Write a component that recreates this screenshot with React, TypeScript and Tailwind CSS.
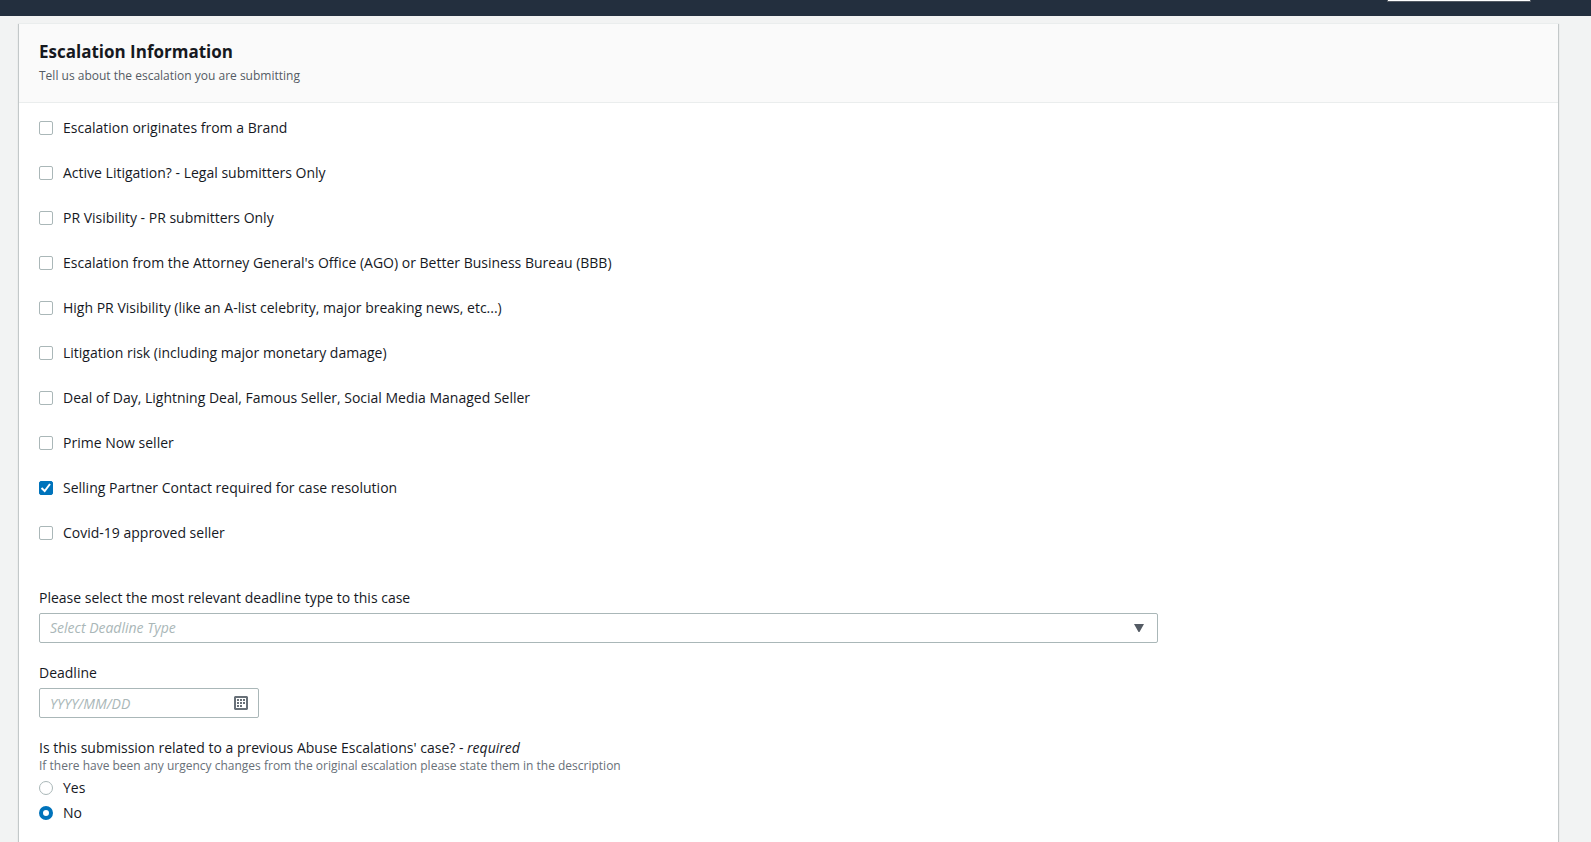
import { useState } from "react";

const flags = [
  "Escalation originates from a Brand",
  "Active Litigation? - Legal submitters Only",
  "PR Visibility - PR submitters Only",
  "Escalation from the Attorney General's Office (AGO) or Better Business Bureau (BBB)",
  "High PR Visibility (like an A-list celebrity, major breaking news, etc...)",
  "Litigation risk (including major monetary damage)",
  "Deal of Day, Lightning Deal, Famous Seller, Social Media Managed Seller",
  "Prime Now seller",
  "Selling Partner Contact required for case resolution",
  "Covid-19 approved seller",
];

const fieldStyle =
  "h-[30px] w-full appearance-none rounded-xs border border-[#aab7b8] bg-white px-2.5 text-sm focus:outline-none focus:border-[#00a1c9]";

const Checkbox = ({ label, defaultChecked = false }: { label: string; defaultChecked?: boolean }) => (
  <label className="flex items-center gap-2.5 leading-5">
    <span className="grid size-3.5 shrink-0">
      <input
        type="checkbox"
        defaultChecked={defaultChecked}
        className="peer col-start-1 row-start-1 size-3.5 appearance-none rounded-xs border border-[#aab7b8] bg-white checked:border-[#0073bb] checked:bg-[#0073bb]"
      />
      <svg
        viewBox="0 0 14 14"
        className="pointer-events-none invisible col-start-1 row-start-1 size-3.5 peer-checked:visible"
        fill="none"
        stroke="#fff"
        strokeWidth="2"
      >
        <path d="M2.5 7 5.7 10 11 3" />
      </svg>
    </span>
    {label}
  </label>
);

const Radio = ({
  label,
  checked,
  onChange,
}: {
  label: string;
  checked: boolean;
  onChange: () => void;
}) => (
  <label className="flex items-center gap-2.5 leading-5">
    <input
      type="radio"
      name="previousCase"
      checked={checked}
      onChange={onChange}
      className="size-3.5 shrink-0 appearance-none rounded-full border border-[#aab7b8] bg-white checked:border-4 checked:border-[#0073bb]"
    />
    {label}
  </label>
);

const CalendarIcon = () => (
  <svg viewBox="0 0 14 14" className="size-3.5" fill="#687078">
    <path fillRule="evenodd" d="M1 0h12l1 1v12l-1 1H1l-1-1V1zM2 2v10h10V2z" />
    <path d="M6 3h2v2H6zM9 3h2v2H9zM3 6h2v2H3zM6 6h2v2H6zM9 6h2v2H9zM3 9h2v2H3zM6 9h2v2H6zM3 3h2v2H3z" />
  </svg>
);

export default function App() {
  const [related, setRelated] = useState("No");
  const [deadlineType, setDeadlineType] = useState("");

  return (
    <div className="flex min-h-screen flex-col bg-[#f2f3f3] font-['Open_Sans','Noto_Sans',sans-serif] text-sm text-[#16191f]">
      {/* Top bar */}
      <header className="flex h-4 items-end justify-end overflow-hidden bg-[#232f3e] pr-[60px] pb-3.5">
        <input
          type="search"
          aria-label="Search"
          className="h-[30px] w-36 shrink-0 appearance-none border border-[#545b64] bg-white px-2"
        />
      </header>

      <main className="mt-[7px] mr-[33px] ml-[19px] flex-1 border-t border-[#eaeded] bg-white shadow-[0_1px_1px_0_rgba(0,28,36,0.3),1px_1px_1px_0_rgba(0,28,36,0.15),-1px_1px_1px_0_rgba(0,28,36,0.15)]">
        <div className="border-b border-[#eaeded] bg-[#fafafa] px-5 py-[18px]">
          <h2 className="text-[17px] leading-5 font-bold">Escalation Information</h2>
          <p className="mt-1.5 text-xs leading-4 text-[#545b64]">
            Tell us about the escalation you are submitting
          </p>
        </div>

        <form className="px-5 pt-[15px]">
          <div className="flex flex-col items-start gap-[25px]">
            {flags.map((flag) => (
              <Checkbox
                key={flag}
                label={flag}
                defaultChecked={flag.startsWith("Selling Partner Contact")}
              />
            ))}
          </div>

          {/* Deadline fields, nine of twelve columns */}
          <div className="mt-[45px] grid grid-cols-12 gap-x-5">
            <div className="col-span-9 flex flex-col gap-5">
              <div>
                <label htmlFor="deadlineType" className="mb-[5px] block leading-5">
                  Please select the most relevant deadline type to this case
                </label>
                <div className="relative">
                  <select
                    id="deadlineType"
                    value={deadlineType}
                    onChange={(e) => setDeadlineType(e.target.value)}
                    className={`${fieldStyle} ${deadlineType ? "" : "text-[#aab7b8] italic"}`}
                  >
                    <option value="">Select Deadline Type</option>
                  </select>
                  <svg
                    viewBox="0 0 10 8"
                    className="pointer-events-none absolute top-[11px] right-3.5 h-2 w-2.5"
                    fill="#545b64"
                  >
                    <path d="M0 0h10L5.5 8h-1z" />
                  </svg>
                </div>
              </div>

              <div>
                <label htmlFor="deadline" className="mb-[5px] block leading-5">
                  Deadline
                </label>
                <div className="relative w-[220px]">
                  <input
                    id="deadline"
                    type="text"
                    placeholder="YYYY/MM/DD"
                    className={`${fieldStyle} placeholder:text-[#aab7b8] placeholder:italic`}
                  />
                  <button type="button" aria-label="Open calendar" className="absolute top-2 right-[11px]">
                    <CalendarIcon />
                  </button>
                </div>
              </div>

              <fieldset>
                <legend className="leading-5">
                  Is this submission related to a previous Abuse Escalations' case? - <i>required</i>
                </legend>
                <p className="text-xs leading-4 text-[#687078]">
                  If there have been any urgency changes from the original escalation please state them in the
                  description
                </p>
                <div className="mt-1 flex flex-col items-start gap-[5px] pb-5">
                  {["Yes", "No"].map((option) => (
                    <Radio
                      key={option}
                      label={option}
                      checked={related === option}
                      onChange={() => setRelated(option)}
                    />
                  ))}
                </div>
              </fieldset>
            </div>
          </div>
        </form>
      </main>
    </div>
  );
}
